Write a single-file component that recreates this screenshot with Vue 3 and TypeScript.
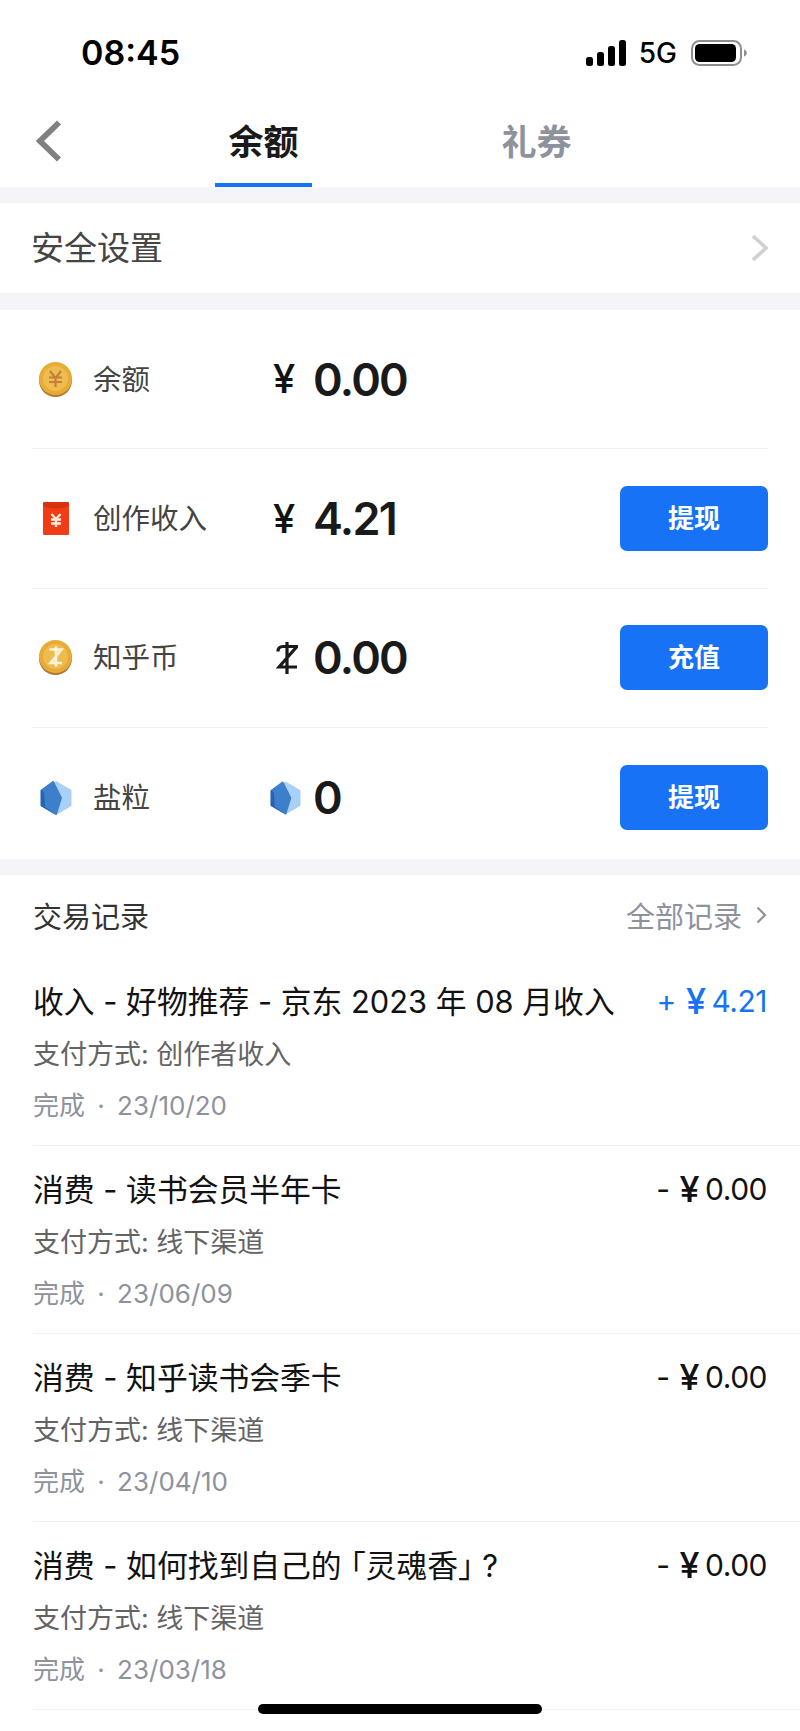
<script setup lang="ts">
interface Asset {
  label: string;
  amount: string;
  unit: 'yuan' | 'coin' | 'salt';
  icon: 'coin' | 'packet' | 'zcoin' | 'salt';
  action?: string;
}

interface Txn {
  title: string;
  pay: string;
  date: string;
  sign: string;
  amount: string;
  income?: boolean;
}

const assets: Asset[] = [
  { label: '余额', amount: '0.00', unit: 'yuan', icon: 'coin' },
  { label: '创作收入', amount: '4.21', unit: 'yuan', icon: 'packet', action: '提现' },
  { label: '知乎币', amount: '0.00', unit: 'coin', icon: 'zcoin', action: '充值' },
  { label: '盐粒', amount: '0', unit: 'salt', icon: 'salt', action: '提现' },
];

const txns: Txn[] = [
  { title: '收入 - 好物推荐 - 京东 2023 年 08 月收入', pay: '支付方式: 创作者收入', date: '完成 · 23/10/20', sign: '+', amount: '4.21', income: true },
  { title: '消费 - 读书会员半年卡', pay: '支付方式: 线下渠道', date: '完成 · 23/06/09', sign: '-', amount: '0.00' },
  { title: '消费 - 知乎读书会季卡', pay: '支付方式: 线下渠道', date: '完成 · 23/04/10', sign: '-', amount: '0.00' },
  { title: '消费 - 如何找到自己的 「灵魂香」 ?', pay: '支付方式: 线下渠道', date: '完成 · 23/03/18', sign: '-', amount: '0.00' },
];
</script>

<template>
  <div class="page">
    <header class="status">
      <span class="time">08:45</span>
      <div class="status-right">
        <svg class="signal" width="40" height="26" viewBox="0 0 40 26">
          <rect x="0" y="17" width="7" height="9" rx="2.5" />
          <rect x="11" y="12" width="7" height="14" rx="2.5" />
          <rect x="22" y="6" width="7" height="20" rx="2.5" />
          <rect x="33" y="0" width="7" height="26" rx="2.5" />
        </svg>
        <span class="net">5G</span>
        <svg class="battery" width="56" height="26" viewBox="0 0 56 26">
          <rect x="1" y="1" width="49" height="24" rx="7.5" fill="none" stroke="#8e8e8e" stroke-width="2" />
          <rect x="4" y="4" width="41" height="18" rx="4.5" fill="#000" />
          <path d="M53 9.5c1.6.5 2.8 1.8 2.8 3.5s-1.2 3-2.8 3.5z" fill="#8e8e8e" />
        </svg>
      </div>
    </header>

    <nav class="nav">
      <svg class="back" width="26" height="42" viewBox="0 0 26 42">
        <path d="M23 2.5 4 21l19 18.5" fill="none" stroke="#808080" stroke-width="5.8" />
      </svg>
      <div class="tab tab-active">余额<i class="tab-line"></i></div>
      <div class="tab tab-second">礼券</div>
    </nav>

    <section class="safety">
      <span class="safety-text">安全设置</span>
      <svg width="18" height="28" viewBox="0 0 18 28">
        <path d="m2 2 13 12L2 26" fill="none" stroke="#cfd0d3" stroke-width="3.6" />
      </svg>
    </section>

    <section class="assets">
      <div v-for="a in assets" :key="a.label" class="asset">
        <span class="asset-icon">
          <svg v-if="a.icon === 'coin'" width="33" height="35" viewBox="0 0 33 35">
            <circle cx="16.5" cy="18.5" r="16.5" fill="#b2763a" />
            <circle cx="16.5" cy="16.5" r="16.5" fill="#e8ab36" />
            <circle cx="16.5" cy="16.5" r="12.5" fill="#efbd4e" />
            <path d="m11 9 5.500 7 5.500-7M10 15.500h13M10 20h13M16.500 15v10" fill="none" stroke="#c47f3a" stroke-width="2.200" />
          </svg>
          <svg v-else-if="a.icon === 'packet'" width="26" height="33" viewBox="0 0 26 33">
            <rect width="26" height="33" rx="1.500" fill="#f23c17" />
            <path d="M0 1.500A1.500 1.500 0 0 1 1.500 0h23A1.500 1.500 0 0 1 26 1.500V4q-13 5-26 0z" fill="#d9300f" />
            <path d="m8.500 12 4.500 5 4.500-5M8 17.500h10M8 21.500h10M13 17v8" fill="none" stroke="#ffe9d8" stroke-width="2.400" />
          </svg>
          <svg v-else-if="a.icon === 'zcoin'" width="33" height="35" viewBox="0 0 33 35">
            <circle cx="16.500" cy="18.500" r="16.500" fill="#b2763a" />
            <circle cx="16.500" cy="16.500" r="16.500" fill="#e8ab36" />
            <circle cx="16.500" cy="16.500" r="12.500" fill="#eebb4f" />
            <path d="M10.500 9.500h12L11.500 23h11.500M17 6.500v20" fill="none" stroke="#fff3dc" stroke-width="2.600" />
          </svg>
          <svg v-else width="32" height="34" viewBox="0 0 32 34">
            <path d="M16 1 1.500 9.500v15L16 33l14.500-8.500v-15z" fill="#a9d0f5" stroke="#a9d0f5" stroke-width="2" stroke-linejoin="round" />
            <path d="M13 1 1.500 9.500v15L16 33l5-16z" fill="#3d7fcb" stroke="#3d7fcb" stroke-width="2" stroke-linejoin="round" />
            <path d="M1 9v16l15 9L5 26 4 11z" fill="#2a62ad" />
          </svg>
        </span>
        <span class="asset-label">{{ a.label }}</span>
        <span class="asset-value">
          <span v-if="a.unit === 'yuan'" class="unit">¥</span>
          <svg v-else-if="a.unit === 'coin'" class="coin-mark" width="22" height="32" viewBox="0 0 22 32">
            <path d="M2 9.500Q2 4.500 7 4.500h14L3 25h18M11 0v32" fill="none" stroke="#1a1a1a" stroke-width="3.200" />
          </svg>
          <svg v-else class="salt-mark" width="31" height="34" viewBox="0 0 32 34">
            <path d="M16 1 1.500 9.500v15L16 33l14.500-8.500v-15z" fill="#a9d0f5" stroke="#a9d0f5" stroke-width="2" stroke-linejoin="round" />
            <path d="M13 1 1.500 9.500v15L16 33l5-16z" fill="#3d7fcb" stroke="#3d7fcb" stroke-width="2" stroke-linejoin="round" />
            <path d="M1 9v16l15 9L5 26 4 11z" fill="#2a62ad" />
          </svg>
          <b class="num">{{ a.amount }}</b>
        </span>
        <button v-if="a.action" class="action"><span>{{ a.action }}</span></button>
      </div>
    </section>

    <section class="records">
      <div class="records-head">
        <span class="records-title">交易记录</span>
        <span class="all">
          全部记录
          <svg width="11" height="18" viewBox="0 0 11 18">
            <path d="m1.500 1.500 7.500 7.500-7.500 7.500" fill="none" stroke="#8d929c" stroke-width="2.200" />
          </svg>
        </span>
      </div>
      <div v-for="t in txns" :key="t.date" class="txn">
        <div class="txn-top">
          <span class="txn-title">{{ t.title }}</span>
          <span class="txn-amount" :class="{ income: t.income }">
            <span>{{ t.sign }}</span><span class="yen">¥</span><span>{{ t.amount }}</span>
          </span>
        </div>
        <div class="txn-pay">{{ t.pay }}</div>
        <div class="txn-date">{{ t.date }}</div>
      </div>
    </section>

    <i class="home-bar"></i>
  </div>
</template>

<style>
body {
  margin: 0;
  background: #fff;
}
</style>

<style scoped>
.page {
  position: relative;
  width: 800px;
  height: 1731px;
  overflow: hidden;
  display: flex;
  flex-direction: column;
  background: #f4f5f8;
  color: #121212;
  font-family: Inter, "Noto Sans CJK SC", sans-serif;
}

.status {
  height: 97px;
  flex: none;
  display: flex;
  align-items: center;
  justify-content: space-between;
  padding: 0 53px 0 81px;
  box-sizing: border-box;
  background: #fff;
  color: #000;
}

.time {
  font-size: 34px;
  font-weight: 600;
  margin-top: 7px;
}

.status-right {
  display: flex;
  align-items: center;
  margin-top: 9px;
}

.signal {
  fill: #000;
}

.net {
  font-size: 28px;
  font-weight: 500;
  margin: 0 14px 0 13px;
}

.nav {
  height: 90px;
  flex: none;
  display: flex;
  align-items: center;
  padding-left: 36px;
  background: #fff;
}

.back {
  margin-top: -2px;
}

.tab {
  position: relative;
  width: 97px;
  height: 90px;
  line-height: 90px;
  text-align: center;
  font-size: 35px;
  font-weight: 700;
  color: #8d929c;
}

.tab-active {
  margin-left: 153px;
  color: #1a1a1a;
}

.tab-second {
  margin-left: 176px;
}

.tab-line {
  position: absolute;
  left: 0;
  right: 0;
  bottom: 0;
  height: 4px;
  background: #1772f6;
}

.safety {
  height: 90px;
  flex: none;
  box-sizing: border-box;
  margin-top: 16px;
  padding: 0 31px 0 31px;
  display: flex;
  align-items: center;
  justify-content: space-between;
  background: #fff;
  font-size: 33px;
  color: #444;
}

.safety-text {
  margin-top: -4px;
}

.assets {
  flex: none;
  margin-top: 17px;
  padding: 0 32px;
  background: #fff;
}

.asset {
  height: 139.400px;
  box-sizing: border-box;
  display: flex;
  align-items: center;
  border-bottom: 1px solid #f0f1f3;
}

.asset:last-child {
  height: 130.800px;
  padding-top: 8px;
  border-bottom: 0;
}

.asset-icon {
  width: 61px;
  display: flex;
  justify-content: center;
  padding-right: 21px;
  padding-left: 7px;
  box-sizing: border-box;
  flex: none;
}

.asset-label {
  width: 180px;
  margin-top: -4px;
  font-size: 28.500px;
  color: #444;
  flex: none;
}

.asset-value {
  display: flex;
  align-items: center;
  flex: 1;
}

.unit {
  width: 40px;
  font-size: 40px;
  font-weight: 500;
  line-height: 1;
}

.coin-mark {
  flex: none;
  margin-left: 3px;
  margin-right: 15px;
}

.salt-mark {
  flex: none;
  margin-left: -3px;
  margin-right: 12px;
}

.num {
  font-size: 45px;
  font-weight: 600;
  letter-spacing: -1.700px;
  line-height: 1;
  color: #1a1a1a;
}

.action {
  width: 148px;
  height: 65px;
  padding: 0 0 4px;
  border: 0;
  border-radius: 7px;
  background: #1772f6;
  color: #fff;
  font: 600 26px Inter, "Noto Sans CJK SC", sans-serif;
}

.records {
  flex: 1;
  margin-top: 16px;
  padding: 0 33px;
  background: #fff;
}

.records-head {
  height: 83px;
  display: flex;
  align-items: center;
  justify-content: space-between;
  font-size: 29px;
  color: #333;
}

.records-title {
  margin-top: -2px;
}

.all {
  display: flex;
  align-items: center;
  gap: 14px;
  margin-top: -2px;
  color: #8d929c;
}

.txn {
  height: 188px;
  box-sizing: border-box;
  border-bottom: 1px solid #f0f1f3;
  padding-top: 19px;
  margin-right: -33px;
}

.txn-top {
  display: flex;
  justify-content: space-between;
  height: 50px;
  line-height: 50px;
  font-size: 30.800px;
  padding-right: 33px;
}

.txn-title {
  color: #121212;
  font-feature-settings: "halt";
}

.txn-amount {
  display: flex;
  margin-top: -1px;
  font-size: 30px;
  letter-spacing: -0.500px;
}

.yen {
  margin: 0 6px 0 10px;
  font-size: 36px;
  font-weight: 500;
}

.income {
  color: #1772f6;
}

.txn-pay {
  margin-top: 5px;
  height: 46px;
  line-height: 46px;
  font-size: 27px;
  color: #646464;
}

.txn-date {
  margin-top: 5px;
  height: 46px;
  line-height: 46px;
  font-size: 26px;
  word-spacing: 5px;
  color: #8d929c;
}

.home-bar {
  position: absolute;
  left: 258px;
  top: 1704px;
  width: 284px;
  height: 10px;
  border-radius: 5px;
  background: #000;
}
</style>
